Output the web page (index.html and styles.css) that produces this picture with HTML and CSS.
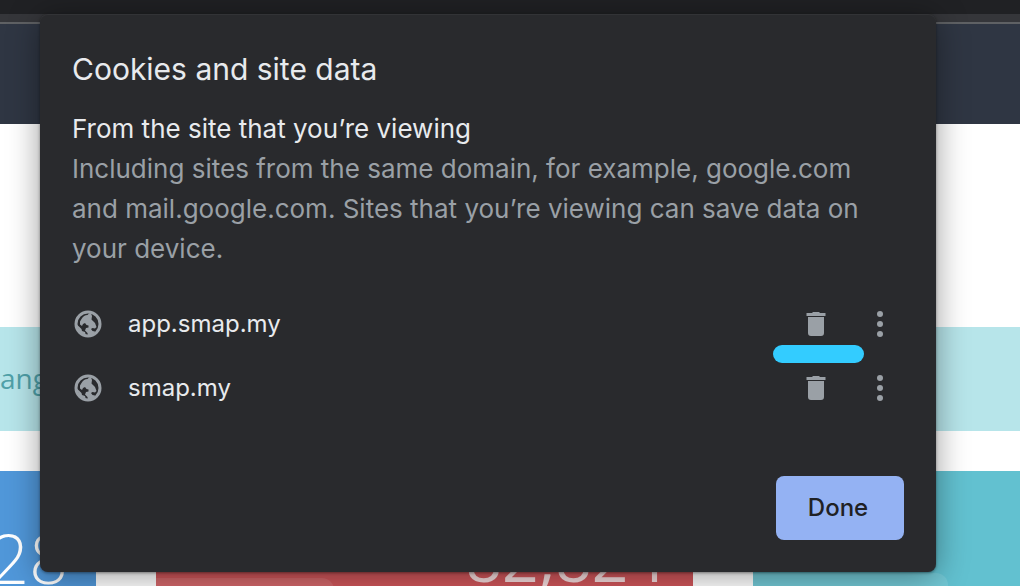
FILE: index.html
```html
<!DOCTYPE html>
<html lang="en">
<head>
    <meta charset="UTF-8">
    <meta name="viewport" content="width=device-width, initial-scale=1.0">
    <title>Cookies and site data</title>
    <link rel="stylesheet" href="styles.css">
</head>
<body>
    <svg class="sprite" aria-hidden="true">
        <symbol id="globe" viewBox="0 0 28 28">
            <circle cx="14" cy="14" r="12" fill="none" stroke="currentColor" stroke-width="3"/>
            <path fill="currentColor" d="M7.5 9 C9 6.5 11 5 13.5 5 L15 3.5 H17 L18 6 L17.5 9.5 L19 11 L21 13 L22.5 17 L21 18.5 L18.5 18 L17 19 L18.5 21 L21 21.5 L20 24 L14 26 L13.5 23 L11 20.5 L12 18 L14.5 17.5 L14.5 15.5 L12.5 15 L11 13 L9 14 L8 16 L6 14.5 L6 11.5 Z"/>
            <path fill="currentColor" d="M2.5 14.5 L5 16.5 L7.5 19 L8 21 L11 22 L12 25.5 L6 23 Z"/>
        </symbol>
        <symbol id="trash" viewBox="0 0 32 32">
            <path fill="currentColor" d="M6.5 5H12l1-1h6l1 1h5.5v3h-19zM8 9h16v16a3 3 0 0 1-3 3H11a3 3 0 0 1-3-3z"/>
        </symbol>
        <symbol id="dots" viewBox="0 0 32 32">
            <g fill="currentColor">
                <circle cx="16" cy="6" r="3"/>
                <circle cx="16" cy="16" r="3"/>
                <circle cx="16" cy="26" r="3"/>
            </g>
        </symbol>
    </svg>

    <div class="page">
        <div class="tab-strip"></div>
        <div class="toolbar"></div>
        <div class="navbar"></div>
        <div class="notice">ang</div>
        <div class="cards">
            <div class="card blue">28</div>
            <div class="card red">82,824</div>
            <div class="card teal"></div>
        </div>
    </div>

    <div class="dialog" role="dialog" aria-labelledby="dialog-title">
        <h1 id="dialog-title">Cookies and site data</h1>
        <h2>From the site that you’re viewing</h2>
        <p>Including sites from the same domain, for example, google.com and mail.google.com. Sites that you’re viewing can save data on your device.</p>
        <ul class="sites">
            <li>
                <svg class="globe"><use href="#globe"/></svg>
                <span class="site-name">app.smap.my</span>
                <button type="button" class="icon-button marked" aria-label="Delete app.smap.my"><svg><use href="#trash"/></svg></button>
                <button type="button" class="icon-button" aria-label="More options for app.smap.my"><svg><use href="#dots"/></svg></button>
            </li>
            <li>
                <svg class="globe"><use href="#globe"/></svg>
                <span class="site-name">smap.my</span>
                <button type="button" class="icon-button" aria-label="Delete smap.my"><svg><use href="#trash"/></svg></button>
                <button type="button" class="icon-button" aria-label="More options for smap.my"><svg><use href="#dots"/></svg></button>
            </li>
        </ul>
        <div class="dialog-actions">
            <button type="button" class="done-button">Done</button>
        </div>
    </div>
</body>
</html>
```
FILE: styles.css
```css
* {
    box-sizing: border-box;
}

body {
    margin: 0;
    position: relative;
    height: 100vh;
    overflow: hidden;
    background-color: #fff;
    font-family: Inter, Roboto, sans-serif;
}

.sprite {
    display: none;
}

/* Page behind the dialog */
.page {
    height: 100%;
    display: flex;
    flex-direction: column;
    overflow: hidden;
    font-family: "Open Sans", sans-serif;
}

.page > div {
    flex-shrink: 0;
}

.tab-strip {
    height: 14px;
    background-color: #202124;
}

.toolbar {
    height: 10px;
    background-color: #35363a;
    border-bottom: 2px solid #5f6164;
}

.navbar {
    height: 100px;
    background-color: #2f3643;
}

.notice {
    margin-top: 203px;
    height: 104px;
    line-height: 102px;
    background-color: #b7e5ea;
    color: #4fa0a8;
    font-size: 28px;
}

.cards {
    margin-top: 40px;
    display: grid;
    grid-template-columns: minmax(0, 96fr) minmax(0, 537fr) minmax(0, 267fr);
    gap: 60px;
}

.card {
    position: relative;
    display: flex;
    justify-content: flex-end;
    height: 240px;
    padding: 40px 28px 0 0;
    color: #fff;
    font-size: 68px;
    font-weight: 300;
    line-height: 94px;
}

.blue {
    background-color: #5097d9;
}

.red {
    background-color: #cf565a;
    color: #f5dcdd;
    font-size: 64px;
    font-weight: 400;
}

.teal {
    background-color: #62c1d0;
}

.red::before,
.teal::before {
    content: "";
    position: absolute;
    left: 0;
    bottom: 0;
    border-top-right-radius: 12px;
    background-color: rgba(255, 255, 255, 0.1);
}

.red::before {
    top: 107px;
    width: 178px;
}

.teal::before {
    top: 102px;
    width: 195px;
}

/* Dialog */
.dialog {
    position: absolute;
    top: 14px;
    left: 40px;
    right: 84px;
    padding: 32px;
    border-radius: 8px;
    background-color: #292a2d;
    color: #e8eaed;
    box-shadow: 0 4px 32px rgba(0, 0, 0, 0.4), 0 1px 3px rgba(0, 0, 0, 0.4), inset 0 1px #323336;
}

.dialog h1 {
    margin: 0 0 17px;
    font-size: 30px;
    font-weight: 400;
    line-height: 46px;
}

.dialog h2 {
    margin: 0;
    font-size: 26px;
    font-weight: 400;
    line-height: 40px;
}

.dialog p {
    margin: 0;
    padding-right: 32px;
    color: #9aa0a6;
    font-size: 26px;
    line-height: 40px;
}

.sites {
    list-style: none;
    margin: 23px 0 56px;
    padding: 0;
}

.sites li {
    display: flex;
    align-items: center;
    height: 64px;
}

.globe {
    width: 28px;
    height: 28px;
    margin: 0 26px 0 2px;
    color: #9aa0a6;
}

.site-name {
    flex: 1;
    padding-bottom: 2px;
    font-size: 24px;
}

.icon-button {
    position: relative;
    display: flex;
    align-items: center;
    justify-content: center;
    width: 64px;
    height: 64px;
    padding: 0;
    border: none;
    background: none;
    color: #9aa0a6;
    cursor: pointer;
}

.icon-button:last-child {
    margin-right: -8px;
}

.icon-button svg {
    width: 32px;
    height: 32px;
}

.marked::after {
    content: "";
    position: absolute;
    left: -11px;
    right: -16px;
    bottom: -7px;
    height: 18px;
    border-radius: 9px;
    background-color: #33ccff;
}

.dialog-actions {
    display: flex;
    justify-content: flex-end;
}

.done-button {
    width: 128px;
    height: 64px;
    padding: 0 4px 2px 0;
    border: none;
    border-radius: 8px;
    background-color: #94b2f3;
    color: #202124;
    font-family: inherit;
    font-size: 24px;
    font-weight: 500;
    cursor: pointer;
}
```
